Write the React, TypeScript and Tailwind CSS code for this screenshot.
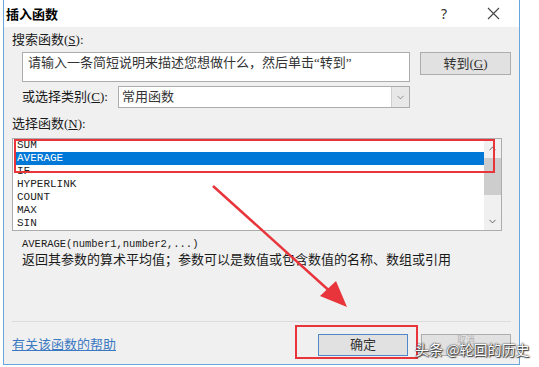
import { ChevronDown, ChevronUp } from 'lucide-react'

const cjk = '"Liberation Serif", "Noto Sans CJK SC", serif'
const mono = '"Liberation Mono", "Noto Sans CJK SC", monospace'

const functions = ['SUM', 'AVERAGE', 'IF', 'HYPERLINK', 'COUNT', 'MAX', 'SIN']

const App = () => {
  return (
    <div
      className="relative w-[539px] h-[367px] bg-white overflow-hidden text-[13px] text-[#1a1a1a]"
      style={{ fontFamily: cjk }}
    >
      {/* Dialog window */}
      <div className="ml-[3px] w-[517px] h-[365px] border border-t-0 border-[#6aa6dc] flex flex-col">
        {/* Title bar */}
        <div className="h-[27px] bg-white flex items-center justify-between pl-[2px]">
          <span
            className="text-[13px] font-semibold text-black leading-none"
            style={{ fontFamily: '"Noto Sans CJK SC", sans-serif' }}
          >
            插入函数
          </span>
          <div className="flex items-center h-full">
            <span className="w-[46px] text-center text-[14px] text-[#333]" style={{ fontFamily: '"Noto Sans", sans-serif' }}>?</span>
            <span className="w-[52px] flex justify-center text-[#444]">
              <svg width="13" height="13" viewBox="0 0 13 13">
                <path d="M1 1L12 12M12 1L1 12" stroke="#444" strokeWidth="1.1" fill="none" />
              </svg>
            </span>
          </div>
        </div>

        {/* Body */}
        <div className="flex-1 bg-[#f0f0f0] pl-[8px] flex flex-col">
          <div className="mt-[5px] h-[16px] leading-[16px]">搜索函数(<u>S</u>):</div>

          <div className="mt-[4px] flex items-start">
            <div className="ml-[10px] w-[388px] h-[30px] bg-white border border-[#acacac] pl-[5px] pt-[2px] leading-[16px] text-[#333]">
              请输入一条简短说明来描述您想做什么，然后单击“转到”
            </div>
            <button className="ml-[10px] w-[91px] h-[23px] bg-[#e1e1e1] border border-[#adadad] flex items-center justify-center text-[13px] text-[#333]">
              转到(<u>G</u>)
            </button>
          </div>

          <div className="mt-[4px] flex items-center">
            <div className="ml-[10px] w-[96px] h-[22px] leading-[22px]">或选择类别(<u>C</u>):</div>
            <div className="w-[292px] h-[22px] bg-white border border-[#acacac] flex items-center justify-between">
              <span className="pl-[3px] text-[#333]">常用函数</span>
              <span className="w-[18px] h-full bg-[#e8e8e8] border-l border-[#cfcfcf] flex items-center justify-center">
                <ChevronDown size={11} strokeWidth={1.5} color="#666" />
              </span>
            </div>
          </div>

          <div className="mt-[8px] h-[16px] leading-[16px]">选择函数(<u>N</u>):</div>

          {/* Function list */}
          <div className="mt-[6px] w-[490px] h-[93px] bg-white border border-[#acacac] flex">
            <div className="flex-1 pl-[1px]" style={{ fontFamily: mono }}>
              {functions.map((f) => (
                <div
                  key={f}
                  className={`h-[13px] leading-[13px] text-[11px] pl-[3px] ${
                    f === 'AVERAGE' ? 'bg-[#0078d7] text-white' : 'text-[#222]'
                  }`}
                >
                  {f}
                </div>
              ))}
            </div>
            <div className="w-[17px] bg-[#f0f0f0] flex flex-col items-center">
              <div className="h-[19px] flex items-center justify-center">
                <ChevronUp size={11} strokeWidth={2} color="#555" />
              </div>
              <div className="w-full h-[37px] bg-[#cdcdcd]" />
              <div className="flex-1" />
              <div className="h-[17px] flex items-center justify-center">
                <ChevronDown size={11} strokeWidth={2} color="#555" />
              </div>
            </div>
          </div>

          <div className="mt-[6px] ml-[10px] leading-[15px]">
            <div className="text-[10.5px]" style={{ fontFamily: mono }}>AVERAGE(number1,number2,...)</div>
            <div>返回其参数的算术平均值；参数可以是数值或包含数值的名称、数组或引用</div>
          </div>

          <div className="mt-[54px] mr-[8px] border-t border-[#dcdcdc]" />

          <div className="mt-[12px] flex items-center">
            <span className="text-[#3b78c2] underline leading-[16px]">有关该函数的帮助</span>
            <div className="flex-1" />
            <button className="w-[90px] h-[22px] bg-[#e1e1e1] border border-[#4f87c9] flex items-center justify-center text-[#333]">
              确定
            </button>
            <button className="ml-[13px] mr-[8px] w-[90px] h-[22px] bg-[#e1e1e1] border border-[#adadad] flex items-start justify-center text-[9px] leading-[10px] text-[#b5b5b5]">
              取消
            </button>
          </div>
        </div>
      </div>

      {/* Red annotation boxes */}
      <div className="absolute left-[14px] top-[139px] w-[481px] h-[34px] border-2 border-[#e8353b]" />
      <div className="absolute left-[295px] top-[325px] w-[123px] h-[34px] border-2 border-[#e8353b]" />

      {/* Red arrow */}
      <svg className="absolute left-0 top-0" width="539" height="367" viewBox="0 0 539 367">
        <line x1="213" y1="186" x2="334" y2="295" stroke="#e8353b" strokeWidth="2.5" />
        <polygon points="347,307 320,296 336,281" fill="#e8353b" />
      </svg>

      {/* Watermark */}
      <div
        className="absolute left-[415px] top-[340px] text-[14px] text-white leading-[18px] whitespace-nowrap"
        style={{
          fontFamily: '"Noto Sans CJK SC", sans-serif',
          textShadow: '0 0 2px #333, 0 0 1px #333, 1px 1px 1px #444',
        }}
      >
        头条 @轮回的历史
      </div>
    </div>
  )
}

export default App
